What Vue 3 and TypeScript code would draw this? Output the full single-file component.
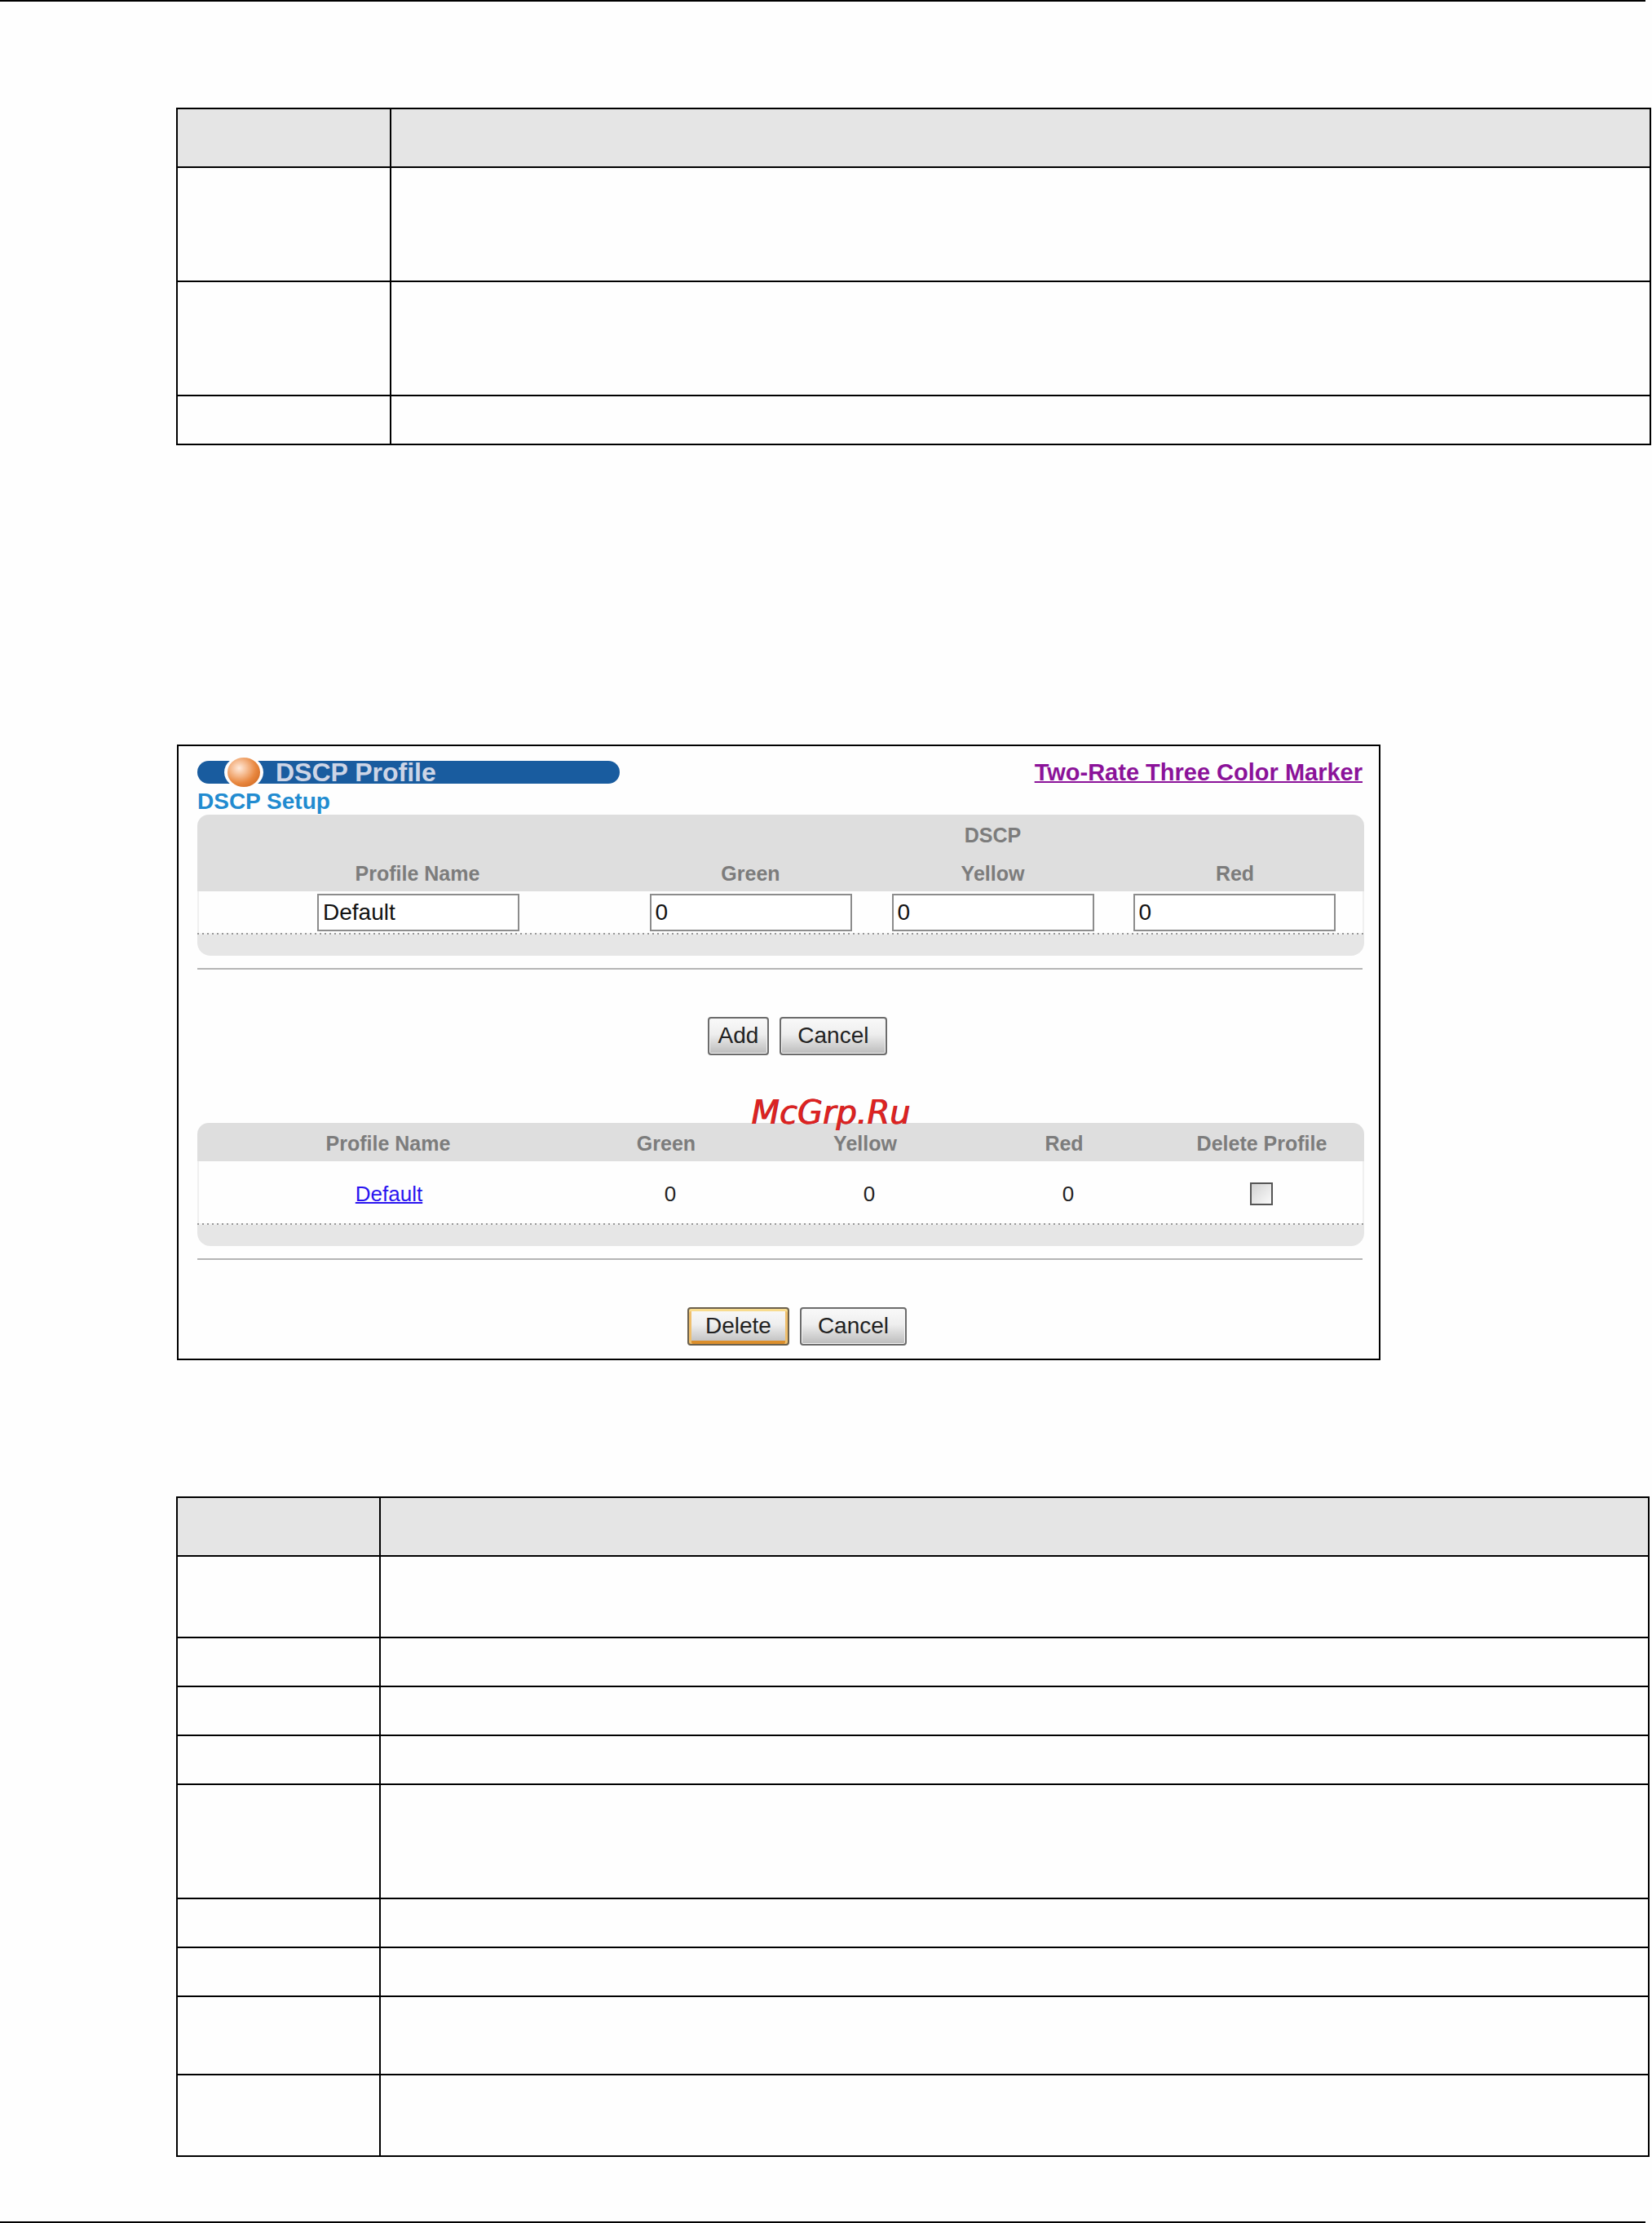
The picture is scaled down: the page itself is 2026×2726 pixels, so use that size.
<script setup lang="ts">
import { ref } from 'vue'

interface Profile {
  name: string
  green: number
  yellow: number
  red: number
  selected: boolean
}

const upperRows: string[] = ['tall', 'tall', 'short']
const lowerRows: string[] = ['double', 'short', 'short', 'short', 'tall', 'short', 'short', 'medium', 'double']

const form = ref({ name: 'Default', green: '0', yellow: '0', red: '0' })
const profiles = ref<Profile[]>([{ name: 'Default', green: 0, yellow: 0, red: 0, selected: false }])
</script>

<template>
  <div class="page">
    <div class="rule"></div>

    <table class="grid grid-upper">
      <thead>
        <tr class="head"><td class="label"></td><td></td></tr>
      </thead>
      <tbody>
        <tr v-for="(size, i) in upperRows" :key="i" :class="size"><td></td><td></td></tr>
      </tbody>
    </table>

    <section class="figure">
      <header class="title-row">
        <div class="title-bar">
          <svg class="ball" viewBox="0 0 48 36" aria-hidden="true">
            <defs>
              <radialGradient id="ball-fill" cx="0.36" cy="0.36" r="0.68">
                <stop offset="0" stop-color="#ffeadb" />
                <stop offset="0.35" stop-color="#f6bd93" />
                <stop offset="0.75" stop-color="#e8873f" />
                <stop offset="1" stop-color="#d9742c" />
              </radialGradient>
            </defs>
            <ellipse cx="24" cy="18" rx="24" ry="20" fill="#fefefe" />
            <ellipse cx="24" cy="18" rx="20" ry="18" fill="url(#ball-fill)" />
          </svg>
          <h1>DSCP Profile</h1>
        </div>
        <a class="marker" href="#marker">Two-Rate Three Color Marker</a>
      </header>
      <h2>DSCP Setup</h2>

      <table class="panel setup">
        <colgroup><col class="c-name" /><col class="c-color" /><col class="c-color" /><col /></colgroup>
        <thead>
          <tr><th></th><th></th><th>DSCP</th><th></th></tr>
          <tr><th>Profile Name</th><th>Green</th><th>Yellow</th><th>Red</th></tr>
        </thead>
        <tbody>
          <tr>
            <td><input v-model="form.name" type="text" aria-label="Profile Name" /></td>
            <td><input v-model="form.green" type="text" aria-label="Green" /></td>
            <td><input v-model="form.yellow" type="text" aria-label="Yellow" /></td>
            <td><input v-model="form.red" type="text" aria-label="Red" /></td>
          </tr>
        </tbody>
      </table>
      <div class="dots"></div>
      <div class="panel-foot"></div>
      <hr />
      <div class="actions">
        <button type="button" class="narrow">Add</button>
        <button type="button">Cancel</button>
      </div>

      <div class="list">
        <span class="watermark">McGrp.Ru</span>
        <table class="panel profiles">
          <colgroup><col class="p-name" /><col class="p-num" /><col class="p-num" /><col class="p-num" /><col /></colgroup>
          <thead>
            <tr>
              <th>Profile Name</th>
              <th class="num">Green</th>
              <th class="num">Yellow</th>
              <th class="num">Red</th>
              <th>Delete Profile</th>
            </tr>
          </thead>
          <tbody>
            <tr v-for="p in profiles" :key="p.name">
              <td><a href="#default">{{ p.name }}</a></td>
              <td>{{ p.green }}</td>
              <td>{{ p.yellow }}</td>
              <td>{{ p.red }}</td>
              <td><input v-model="p.selected" type="checkbox" aria-label="Delete Profile" /></td>
            </tr>
          </tbody>
        </table>
        <div class="dots"></div>
        <div class="panel-foot"></div>
      </div>
      <hr />
      <div class="actions">
        <button type="button" class="focused">Delete</button>
        <button type="button">Cancel</button>
      </div>
    </section>

    <table class="grid grid-lower">
      <thead>
        <tr class="head"><td class="label"></td><td></td></tr>
      </thead>
      <tbody>
        <tr v-for="(size, i) in lowerRows" :key="i" :class="size"><td></td><td></td></tr>
      </tbody>
    </table>

    <div class="rule"></div>
  </div>
</template>

<style>
body {
  background: #fefefe;
}
</style>

<style scoped>
.page {
  display: flex;
  flex-direction: column;
  font-family: "Liberation Sans", Arial, sans-serif;
  color: #222;
}
.rule {
  height: 2px;
  margin-right: 8px;
  background: #000;
}

/* Ruled document tables */
.grid {
  border-collapse: collapse;
  table-layout: fixed;
  margin-left: 216px;
}
.grid-upper {
  width: calc(100% - 217px);
  margin-top: 130px;
}
.grid-lower {
  width: calc(100% - 219px);
  margin-top: 167px;
  margin-bottom: 79px;
}
.grid td {
  padding: 0;
  border: 2px solid #000;
}
.grid .head { height: 72px; background: #e5e5e5; }
.grid .tall { height: 140px; }
.grid .double { height: 100px; }
.grid .medium { height: 96px; }
.grid .short { height: 60px; }
.grid-upper .label { width: 260px; }
.grid-lower .label { width: 247px; }

/* Configuration screen */
.figure {
  box-sizing: border-box;
  max-width: 1476px;
  margin: 367px 0 0 217px;
  padding: 18px 18px 16px 23px;
  border: 2px solid #000;
}
.title-row {
  display: flex;
  justify-content: space-between;
  align-items: center;
  height: 28px;
  padding-right: 2px;
}
.title-bar {
  display: flex;
  align-items: center;
  box-sizing: border-box;
  width: 518px;
  height: 28px;
  padding-left: 33px;
  border-radius: 14px;
  background: #195c9f;
}
.ball {
  flex: none;
  width: 48px;
  height: 36px;
  overflow: visible;
}
h1 {
  margin: 0 0 0 15px;
  font-size: 32px;
  line-height: 28px;
  color: #cdd5e6;
}
.marker {
  font-size: 29px;
  font-weight: bold;
  line-height: 28px;
  color: #8b1299;
  text-decoration-thickness: 2px;
}
h2 {
  margin: 0;
  padding-top: 6px;
  font-size: 28px;
  line-height: 32px;
  color: #218bd0;
}

.panel {
  width: 100%;
  border-spacing: 0;
  table-layout: fixed;
  border-radius: 14px 14px 0 0;
  overflow: hidden;
}
.panel th {
  padding: 5px 0 1px;
  height: 41px;
  font-size: 25px;
  line-height: 41px;
  color: #7c7c7c;
  background: #dedede;
}
.panel td {
  padding: 0;
  text-align: center;
}
.panel tbody td:first-child { border-left: 2px solid #f0f0f0; }
.panel tbody td:last-child { border-right: 2px solid #f0f0f0; }
.panel tr > :first-child { padding-left: 10px; }
.panel tr > :last-child { padding-right: 10px; }
.panel col { box-sizing: border-box; }
.c-name { width: 530px; }
.c-color { width: 297px; }
.setup td {
  height: 51px;
}
.setup input {
  display: block;
  box-sizing: border-box;
  width: 248px;
  max-width: 100%;
  height: 46px;
  margin: 0 auto;
  padding: 0 5px;
  border: 2px solid #8c8c8c;
  border-radius: 0;
  background: #fff;
  color: #111;
  font-family: inherit;
  font-size: 28px;
}
.dots {
  height: 2px;
  background: repeating-linear-gradient(90deg, #999 0 2px, #f2f2f2 2px 6px);
}
.panel-foot {
  height: 26px;
  border-radius: 0 0 16px 16px;
  background: #e6e6e6;
}
hr {
  height: 2px;
  margin: 15px 2px 58px 0;
  border: 0;
  background: #b5b5b5;
}
.actions {
  display: flex;
  justify-content: center;
  gap: 13px;
  padding-left: 40px;
}
button {
  box-sizing: border-box;
  height: 47px;
  padding: 0 20px 2px;
  border: 2px solid #6c6c6c;
  border-radius: 4px;
  background: linear-gradient(#f9f9f9, #eeeeee 45%, #bcbcbc);
  box-shadow: inset 0 0 0 1px #f4f4f4;
  color: #222;
  font-family: inherit;
  font-size: 28px;
}
.narrow {
  padding: 0 11px 2px;
}
.focused {
  border-color: #6b604c;
  box-shadow: inset 0 3px 0 #f8dc8f, inset 3px 0 0 #efbf6c, inset -3px 0 0 #efbf6c, inset 0 -4px 0 #dc8f2c;
}

.list {
  position: relative;
  margin-top: 83px;
}
.watermark {
  position: absolute;
  top: -37px;
  left: 679px;
  z-index: 1;
  font-family: "DejaVu Sans", sans-serif;
  font-size: 40px;
  line-height: 48px;
  font-style: italic;
  color: #dc2323;
  text-shadow: 1px 0 0 #a81c1c;
}
.p-name { width: 458px; }
.p-num { width: 244px; }
.profiles .num { padding-right: 10px; }
.profiles td {
  height: 72px;
  padding-top: 4px;
  font-size: 26px;
}
.profiles a {
  color: #2a14f0;
  text-decoration-thickness: 2px;
}
.profiles input {
  display: block;
  appearance: none;
  box-sizing: border-box;
  width: 28px;
  height: 28px;
  margin: 0 auto;
  border: 2px solid #555;
  background: linear-gradient(135deg, #d2d2d2, #fafafa);
}
</style>
